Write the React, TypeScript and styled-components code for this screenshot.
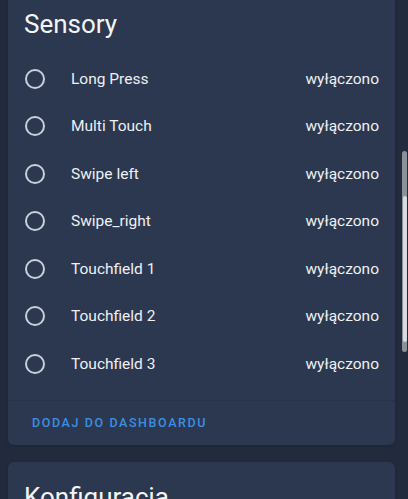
import React from 'react'
import styled, { createGlobalStyle } from 'styled-components'

const GlobalStyle = createGlobalStyle`
  html, body {
    margin: 0;
    padding: 0;
    background: #222b3d;
    font-family: Roboto, "Noto Sans", sans-serif;
    overflow: hidden;
  }
`

const Page = styled.div`
  display: flex;
  flex-direction: column;
  gap: 17px;
  margin-top: -11px;
  padding: 0 13px 0 8px;
`

const Card = styled.section`
  background: #2c3850;
  border-radius: 6px;
  box-shadow: 0 1px 3px rgba(0, 0, 0, 0.18);
  display: flex;
  flex-direction: column;
`

const CardHeader = styled.h2`
  margin: 0;
  padding: 17px 16px 0;
  font-size: 26px;
  line-height: 36px;
  font-weight: 400;
  color: #f3f4f6;
`

const Rows = styled.div`
  display: flex;
  flex-direction: column;
  padding: 13px 0 12px;
`

const Row = styled.div`
  display: flex;
  align-items: center;
  height: 47.5px;
  padding: 0 16px 0 16px;
`

const Radio = styled.span`
  box-sizing: border-box;
  width: 20px;
  height: 20px;
  border: 2px solid #c9cfdb;
  border-radius: 50%;
  margin-left: 1px;
  flex: none;
`

const Label = styled.span`
  flex: 1;
  margin-left: 26px;
  font-size: 15.5px;
  color: #eef0f4;
`

const Value = styled.span`
  font-size: 15.5px;
  color: #eef0f4;
`

const Actions = styled.div`
  border-top: 1px solid #26314a;
  height: 44px;
  display: flex;
  align-items: center;
  padding: 0 24px;
`

const ActionButton = styled.button`
  background: none;
  border: none;
  padding: 0;
  font-family: inherit;
  font-size: 12.5px;
  font-weight: 500;
  letter-spacing: 1.6px;
  color: #3b8fe3;
  text-transform: uppercase;
  cursor: pointer;
`

const ScrollTrack = styled.div`
  position: fixed;
  right: 1px;
  top: 151px;
  width: 5px;
  height: 201px;
  border-radius: 3px;
  background: #8c9099;
`

const ScrollThumb = styled.div`
  position: absolute;
  left: 1px;
  right: 0;
  top: 45px;
  bottom: 10px;
  border-radius: 2px;
  background: #d9dadd;
`

const sensors = [
  'Long Press',
  'Multi Touch',
  'Swipe left',
  'Swipe_right',
  'Touchfield 1',
  'Touchfield 2',
  'Touchfield 3',
]

export default function App () {
  return (
    <>
      <GlobalStyle />
      <Page>
        <Card>
          <CardHeader>Sensory</CardHeader>
          <Rows>
            {sensors.map((name) => (
              <Row key={name}>
                <Radio />
                <Label>{name}</Label>
                <Value>wyłączono</Value>
              </Row>
            ))}
          </Rows>
          <Actions>
            <ActionButton>Dodaj do dashboardu</ActionButton>
          </Actions>
        </Card>
        <Card>
          <CardHeader>Konfiguracja</CardHeader>
          <Rows />
        </Card>
      </Page>
      <ScrollTrack>
        <ScrollThumb />
      </ScrollTrack>
    </>
  )
}
